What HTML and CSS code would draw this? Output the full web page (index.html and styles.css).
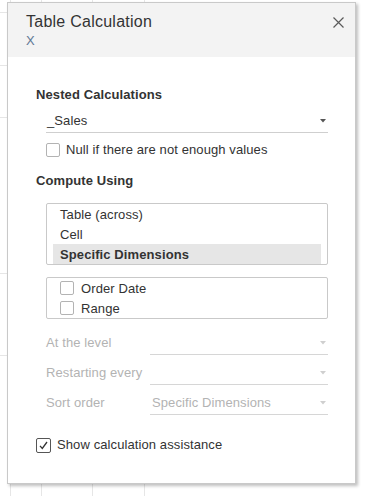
FILE: index.html
```html
<!DOCTYPE html>
<html>
<head>
<meta charset="utf-8">
<link rel="stylesheet" href="styles.css">
</head>
<body>
<div class="dialog">
  <div class="header">
    <div class="titles">
      <div class="title">Table Calculation</div>
      <div class="subtitle">X</div>
    </div>
    <div class="close">
      <svg width="11" height="11" viewBox="0 0 11 11"><path d="M0.5 0.5 L10.5 10.5 M10.5 0.5 L0.5 10.5" stroke="#5a5a5a" stroke-width="1.2" fill="none"/></svg>
    </div>
  </div>
  <div class="content">
    <div class="section-title">Nested Calculations</div>
    <div class="select nested">
      <span class="value">_Sales</span>
      <svg class="arrow" width="6" height="4" viewBox="0 0 6 4"><polygon points="0,0 6,0 3,3.5" fill="#555"/></svg>
    </div>
    <div class="check-row null-row">
      <span class="cb"></span>
      <span>Null if there are not enough values</span>
    </div>
    <div class="section-title compute">Compute Using</div>
    <div class="listbox">
      <div class="item">Table (across)</div>
      <div class="item">Cell</div>
      <div class="item selected">Specific Dimensions</div>
    </div>
    <div class="listbox dims">
      <div class="item dim"><span class="cb"></span><span>Order Date</span></div>
      <div class="item dim"><span class="cb"></span><span>Range</span></div>
    </div>
    <div class="form-rows">
      <div class="form-row">
        <span class="label">At the level</span>
        <div class="select disabled"><span class="value"></span><svg class="arrow" width="6" height="4" viewBox="0 0 6 4"><polygon points="0,0 6,0 3,3.5" fill="#cfcfcf"/></svg></div>
      </div>
      <div class="form-row">
        <span class="label">Restarting every</span>
        <div class="select disabled"><span class="value"></span><svg class="arrow" width="6" height="4" viewBox="0 0 6 4"><polygon points="0,0 6,0 3,3.5" fill="#cfcfcf"/></svg></div>
      </div>
      <div class="form-row">
        <span class="label">Sort order</span>
        <div class="select disabled"><span class="value">Specific Dimensions</span><svg class="arrow" width="6" height="4" viewBox="0 0 6 4"><polygon points="0,0 6,0 3,3.5" fill="#cfcfcf"/></svg></div>
      </div>
    </div>
    <div class="check-row assist">
      <span class="cb checked"><svg width="13" height="13" viewBox="0 0 13 13"><polyline points="3,6.8 5.3,9.5 10,3" fill="none" stroke="#333" stroke-width="1.3"/></svg></span>
      <span>Show calculation assistance</span>
    </div>
  </div>
</div>
</body>
</html>
```

FILE: styles.css
```css
* { box-sizing: border-box; }

html, body { height: 100%; }

body {
  margin: 0;
  padding: 2px 0 0 7px;
  font-family: "Liberation Sans", Arial, sans-serif;
  font-size: 13px;
  letter-spacing: 0.1px;
  color: #333;
  background-color: #fff;
  background-image:
    linear-gradient(to right, transparent 41px, #e6e6e6 41px, #e6e6e6 42px, transparent 42px),
    linear-gradient(to right, transparent 92px, #e6e6e6 92px, #e6e6e6 93px, transparent 93px),
    linear-gradient(to right, transparent 144px, #e6e6e6 144px, #e6e6e6 145px, transparent 145px),
    linear-gradient(to right, transparent 10px, #e6e6e6 10px, #e6e6e6 11px, transparent 11px),
    linear-gradient(to bottom, transparent 12px, #e6e6e6 12px, #e6e6e6 13px, transparent 13px),
    linear-gradient(to bottom, transparent 65px, #e6e6e6 65px, #e6e6e6 66px, transparent 66px),
    linear-gradient(to bottom, transparent 117px, #e6e6e6 117px, #e6e6e6 118px, transparent 118px),
    linear-gradient(to bottom, transparent 273px, #e6e6e6 273px, #e6e6e6 274px, transparent 274px),
    linear-gradient(to bottom, transparent 355px, #e6e6e6 355px, #e6e6e6 356px, transparent 356px);
  background-size: 100% 100%, 100% 100%, 100% 100%, 100% 100%, 7px 100%, 7px 100%, 7px 100%, 7px 100%, 7px 100%;
  background-repeat: no-repeat;
}

.dialog {
  width: 349px;
  height: 482px;
  background: #fff;
  border: 1px solid #c9c9c9;
  box-shadow: 2px 2px 3px rgba(0, 0, 0, 0.25);
  display: flex;
  flex-direction: column;
}

.header {
  height: 54px;
  background: #f3f3f3;
  display: flex;
  justify-content: space-between;
  align-items: flex-start;
  padding: 10px 11px 0 18px;
}

.title {
  font-size: 16px;
  line-height: 18px;
  letter-spacing: 0.25px;
  color: #333;
}

.subtitle {
  margin-top: 2px;
  font-size: 13px;
  line-height: 15px;
  color: #5f7895;
}

.close {
  margin-top: 4px;
  width: 11px;
  height: 11px;
  display: flex;
}

.content {
  padding: 30px 27px 0 28px;
  display: flex;
  flex-direction: column;
}

.section-title {
  font-weight: bold;
  line-height: 16px;
  color: #333;
}

.section-title.compute {
  margin-top: 15px;
}

.select {
  display: flex;
  align-items: center;
  justify-content: space-between;
  border-bottom: 1px solid #cfcfcf;
  padding: 0 2px 3px 1px;
  line-height: 16px;
  min-height: 20px;
}

.select.nested {
  margin: 10px 0 0 10px;
  width: 282px;
}

.select .arrow { flex: none; }

.check-row {
  display: flex;
  align-items: center;
  gap: 6px;
  line-height: 16px;
}

.null-row {
  margin: 9px 0 0 10px;
}

.cb {
  flex: none;
  width: 14px;
  height: 14px;
  border: 1px solid #b3b3b3;
  border-radius: 2px;
  background: #fff;
}

.cb.checked {
  border-color: #555;
  display: flex;
  align-items: center;
  justify-content: center;
}

.listbox {
  margin: 14px 0 0 10px;
  width: 282px;
  border: 1px solid #c9c9c9;
  border-radius: 2px;
  display: flex;
  flex-direction: column;
}

.listbox.dims {
  margin-top: 12px;
}

.item {
  height: 20px;
  margin: 0 6px;
  padding: 1px 0 0 7px;
  line-height: 19px;
}

.item.selected {
  background: #e6e6e6;
  font-weight: bold;
}

.item.dim {
  display: flex;
  align-items: center;
  gap: 7px;
  padding-top: 0;
}

.form-rows {
  margin: 16px 0 0 10px;
  display: flex;
  flex-direction: column;
  gap: 10px;
}

.form-row {
  display: flex;
  align-items: flex-start;
}

.form-row .label {
  width: 104px;
  flex: none;
  line-height: 16px;
  color: #b3b3b3;
}

.select.disabled {
  width: 178px;
  color: #b3b3b3;
  padding-left: 2px;
  border-bottom-color: #d6d6d6;
}

.assist {
  margin-top: 22px;
}

.assist .cb {
  width: 15px;
  height: 15px;
}
```
